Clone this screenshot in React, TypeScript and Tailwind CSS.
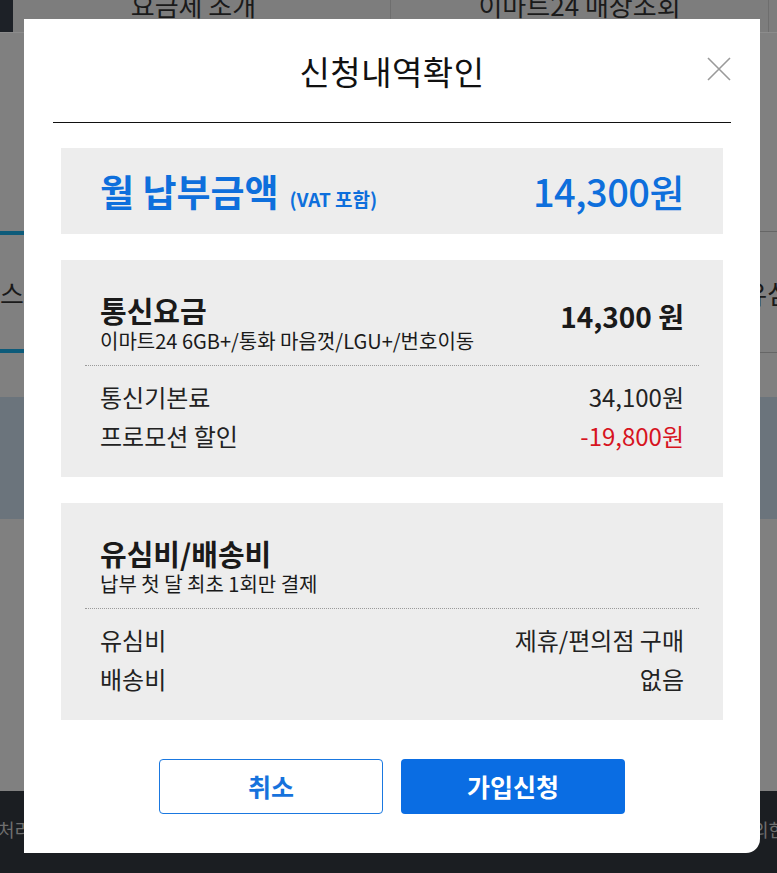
import React from "react";

const font = { fontFamily: '"Noto Sans CJK KR", "Noto Sans", sans-serif' };

function Row({ label, value, red }: { label: string; value: string; red?: boolean }) {
  return (
    <div className="flex items-center justify-between px-[15px] text-[24px] leading-[39px]">
      <span className="text-[#222]">{label}</span>
      <span className={red ? "text-[#d7141f]" : "text-[#222]"}>{value}</span>
    </div>
  );
}

function DetailBox({
  title,
  sub,
  value,
  rows,
}: {
  title: string;
  sub: string;
  value?: string;
  rows: { label: string; value: string; red?: boolean }[];
}) {
  return (
    <div className="bg-[#ededed] px-[24px] pt-[34px] h-[217px]">
      <div className="flex items-start justify-between px-[15px]">
        <div>
          <div className="text-[29px] leading-[32px] font-bold text-[#1a1a1a]">{title}</div>
          <div className="mt-[3px] text-[20px] leading-[23px] text-[#1a1a1a]">{sub}</div>
        </div>
        {value && (
          <div className="mt-[5px] text-[28px] leading-[34px] font-bold text-[#1a1a1a]">{value}</div>
        )}
      </div>
      <div className="mt-[13px] border-t border-dotted border-[#9a9a9a]" />
      <div className="mt-[11px]">
        {rows.map((r) => (
          <Row key={r.label} {...r} />
        ))}
      </div>
    </div>
  );
}

export default function App() {
  return (
    <div className="relative w-[777px] h-[873px] overflow-hidden bg-[#808080]" style={font}>
      {/* Background page (dimmed) */}
      <div className="flex flex-col h-full">
        <div className="flex h-[33px] border-b border-[#8c8c8c] bg-[#7d7d7d]">
          <div className="w-[13px] bg-[#1d2127]" />
          <div className="flex-1 flex items-end justify-center border-r border-[#6e6e6e] text-[26px] leading-[30px] text-[#1a1a1a] overflow-hidden">
            <span className="relative top-[-12px] left-[-8px]">요금제 조개</span>
          </div>
          <div className="flex-1 flex items-end justify-center border-r border-[#6e6e6e] text-[26px] leading-[30px] text-[#1a1a1a] overflow-hidden">
            <span className="relative top-[-12px]">이마트24 매장조회</span>
          </div>
          <div className="w-[8px]" />
        </div>
        <div className="h-[198px]" />
        <div className="flex h-[122px]">
          <div className="flex-1 flex items-center border-y-[4px] border-[#0d5b7a] text-[26px] text-[#1a1a1a]">
            <span className="w-[24px] flex justify-end whitespace-nowrap">서비스</span>
          </div>
          <div className="flex-1 flex items-center justify-end border-y border-[#666] text-[26px] text-[#1a1a1a]">
            <span className="mr-[-14px] whitespace-nowrap">유심</span>
          </div>
        </div>
        <div className="h-[44px]" />
        <div className="h-[122px] bg-[#6b747c]" />
        <div className="h-[272px]" />
        <div className="flex-1 bg-[#1b1e22] flex items-center justify-between text-[18px] text-[#6f6f6f]">
          <span className="ml-[-2px] mt-[-6px]">처리</span>
          <span className="mr-[-8px] mt-[-6px]">의한</span>
        </div>
      </div>

      {/* Modal */}
      <div className="absolute left-[24px] top-[19px] w-[736px] h-[834px] bg-white rounded-br-[14px] px-[29px]">
        <div className="relative h-[104px] border-b border-[#111] flex items-start justify-center">
          <h1 className="mt-[30px] text-[33px] leading-[44px] font-normal text-[#111] tracking-[0.5px]">
            신청내역확인
          </h1>
          <button className="absolute right-[0px] top-[38px] w-[24px] h-[24px]" aria-label="닫기">
            <svg viewBox="0 0 24 24" width="24" height="24">
              <path d="M1 1 L23 23 M23 1 L1 23" stroke="#9a9a9a" strokeWidth="1.6" fill="none" />
            </svg>
          </button>
        </div>

        <div className="mx-[8px] mt-[25px] flex flex-col gap-[26px]">
          <div className="h-[86px] bg-[#ededed] px-[39px] flex items-center justify-between text-[#0e6fdc]">
            <div className="flex items-baseline">
              <span className="text-[37px] font-bold leading-[44px]">월 납부금액</span>
              <span className="ml-[11px] text-[19px] font-bold">(VAT 포함)</span>
            </div>
            <span className="text-[38px] font-medium leading-[44px] tracking-[-0.5px]">14,300원</span>
          </div>

          <DetailBox
            title="통신요금"
            sub="이마트24 6GB+/통화 마음껏/LGU+/번호이동"
            value="14,300 원"
            rows={[
              { label: "통신기본료", value: "34,100원" },
              { label: "프로모션 할인", value: "-19,800원", red: true },
            ]}
          />

          <DetailBox
            title="유심비/배송비"
            sub="납부 첫 달 최초 1회만 결제"
            rows={[
              { label: "유심비", value: "제휴/편의점 구매" },
              { label: "배송비", value: "없음" },
            ]}
          />
        </div>

        <div className="mt-[39px] flex justify-center gap-[18px]">
          <button className="w-[224px] h-[55px] rounded-[4px] border border-[#1a78e0] bg-white text-[#1672dc] text-[25px] font-bold">
            취소
          </button>
          <button className="w-[224px] h-[55px] rounded-[4px] bg-[#0a6de3] text-white text-[25px] font-bold">
            가입신청
          </button>
        </div>
      </div>
    </div>
  );
}
